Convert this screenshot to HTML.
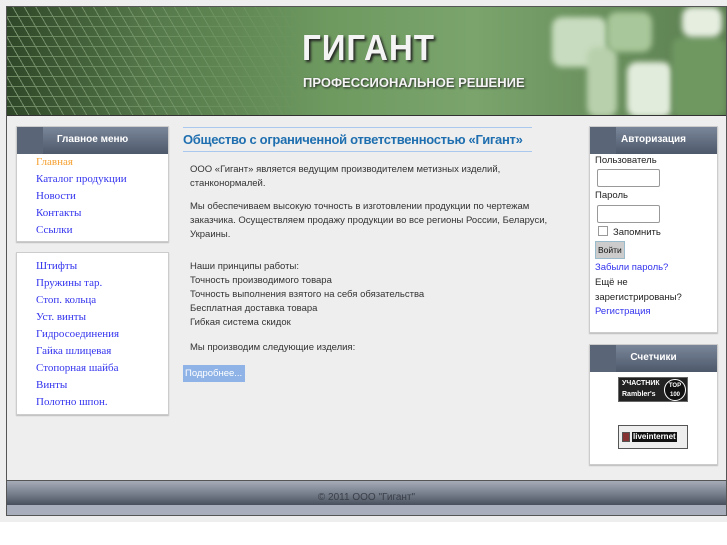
<!DOCTYPE html>
<html><head><meta charset="utf-8"><style>
*{margin:0;padding:0;box-sizing:border-box}
body{width:727px;height:545px;background:#fff;font-family:"Liberation Sans","DejaVu Sans",sans-serif;position:relative;overflow:hidden}
.pg{position:absolute;left:0;top:0;width:727px;height:522px;background:#eee}
.frame{position:absolute;left:6px;top:6px;width:721px;height:510px;border:1px solid #555;background:#eee}
.hdr{position:absolute;left:7px;top:7px;width:719px;height:109px;border-bottom:1px solid #333;overflow:hidden;
background:linear-gradient(90deg,#2f4728 0%,#55784a 20%,#6e9a60 45%,#7aa46c 65%,#5b7e50 100%)}
.grid{position:absolute;left:0;top:0;width:300px;height:109px;opacity:.45;
background:repeating-linear-gradient(60deg,transparent 0 9px,#cfe8c0 9px 10px),repeating-linear-gradient(0deg,transparent 0 9px,#b8d8a8 9px 10px);
-webkit-mask:linear-gradient(90deg,#000,transparent);}
.pz{position:absolute;background:#d9e6d2;border-radius:10px;filter:blur(3px)}
.t1{position:absolute;left:295px;top:20px;color:#f4f4f4;font-weight:bold;font-size:36px;letter-spacing:1px;text-shadow:2px 2px 3px #222;transform:scaleX(.92);transform-origin:left}
.t2{position:absolute;left:296px;top:68px;color:#f4f4f4;font-weight:bold;font-size:13px;text-shadow:1px 1px 2px #222}
.box{position:absolute;background:#fff;border:1px solid #ccc;box-shadow:0 1px 1px #bbb}
.bh{height:27px;background:linear-gradient(#7a8699,#4d596b);color:#fff;font-weight:bold;font-size:10px;text-align:center;line-height:26px;border-left:26px solid #5a6678;padding-right:26px}
.menu a{display:block;font-family:"Liberation Serif",serif;font-size:11px;color:#3333ee;text-decoration:none;line-height:17px;padding-left:19px}
.c{position:absolute;left:190px;font-size:9.5px;color:#333;line-height:14px;white-space:nowrap}
.r{font-size:9.5px;color:#222;line-height:18px;padding-left:5px}
.inp{width:63px;height:18px;border:1px solid #999;border-radius:2px;margin:2px 0 2px 2px}
.ftr{position:absolute;left:7px;top:480px;width:719px;height:35px;background:linear-gradient(#a6acb8,#6d7583 45%,#1f2530 100%);border-top:1px solid #555}
.fs{position:absolute;left:7px;top:505px;width:719px;height:10px;background:#a8aebb}
</style></head><body>
<div class="pg"></div><div class="frame"></div>
<div class="hdr"><div class="grid"></div>
<div class="pz" style="left:545px;top:10px;width:55px;height:50px;background:#c8dcbf"></div>
<div class="pz" style="left:580px;top:40px;width:30px;height:70px;background:#b8d0ac"></div>
<div class="pz" style="left:600px;top:5px;width:45px;height:40px;background:#a8c79a"></div>
<div class="pz" style="left:620px;top:55px;width:45px;height:55px;background:#e2ecdc"></div>
<div class="pz" style="left:665px;top:30px;width:54px;height:80px;background:#6f9861"></div>
<div class="pz" style="left:675px;top:0;width:40px;height:30px;background:#e6eee0"></div>
<div class="t1">ГИГАНТ</div><div class="t2">ПРОФЕССИОНАЛЬНОЕ РЕШЕНИЕ</div></div>

<div class="box" style="left:16px;top:126px;width:153px;height:116px"><div class="bh">Главное меню</div>
<div class="menu"><a style="color:#f5a030">Главная</a><a>Каталог продукции</a><a>Новости</a><a>Контакты</a><a>Ссылки</a></div></div>
<div class="box" style="left:16px;top:252px;width:153px;height:163px"><div class="menu" style="padding-top:5px"><a>Штифты</a><a>Пружины тар.</a><a>Стоп. кольца</a><a>Уст. винты</a><a>Гидросоединения</a><a>Гайка шлицевая</a><a>Стопорная шайба</a><a>Винты</a><a>Полотно шпон.</a></div></div>

<div style="position:absolute;left:183px;top:127px;width:349px;height:25px;border-top:1px solid #a9c8ee;border-bottom:1px solid #a9c8ee"></div>
<div style="position:absolute;left:183px;top:128px;color:#1f6fb0;font-size:13px;font-weight:bold;line-height:23px;white-space:nowrap;letter-spacing:-0.3px">Общество с ограниченной ответственностью «Гигант»</div>
<div class="c" style="top:163px">ООО «Гигант» является ведущим производителем метизных изделий,<br>станконормалей.</div>
<div class="c" style="top:200px">Мы обеспечиваем высокую точность в изготовлении продукции по чертежам<br>заказчика. Осуществляем продажу продукции во все регионы России, Беларуси,<br>Украины.</div>
<div class="c" style="top:260px">Наши принципы работы:<br>Точность производимого товара<br>Точность выполнения взятого на себя обязательства<br>Бесплатная доставка товара<br>Гибкая система скидок</div>
<div class="c" style="top:341px">Мы производим следующие изделия:</div>
<div style="position:absolute;left:183px;top:365px;width:62px;height:17px;background:#8fb3e6;color:#fff;font-size:9.5px;line-height:17px;padding-left:2px">Подробнее...</div>

<div class="box" style="left:589px;top:126px;width:129px;height:207px"><div class="bh">Авторизация</div>
<div class="r" style="line-height:13px">Пользователь</div>
<div class="r"><div class="inp"></div></div>
<div class="r" style="line-height:14px">Пароль</div>
<div class="r"><div class="inp"></div></div>
<div class="r" style="line-height:16px"><span style="display:inline-block;width:10px;height:10px;border:1px solid #999;margin:0 5px 0 3px;vertical-align:-1px"></span>Запомнить</div>
<div class="r" style="line-height:20px"><span style="display:inline-block;background:#ccc;border:1px solid #9bc;font-size:8.5px;line-height:16px;padding:0 2px;color:#111">Войти</span></div>
<div class="r" style="line-height:14px;color:#3333ee">Забыли пароль?</div>
<div class="r" style="line-height:15px">Ещё не<br>зарегистрированы?</div>
<div class="r" style="line-height:14px;color:#3333ee">Регистрация</div></div>

<div class="box" style="left:589px;top:344px;width:129px;height:121px"><div class="bh">Счетчики</div>
<div style="position:absolute;left:28px;top:32px;width:70px;height:25px;background:#222;border:1px solid #666;color:#fff;font-size:7px;font-weight:bold;line-height:11px;padding-left:3px">УЧАСТНИК<br>Rambler's<span style="position:absolute;right:1px;top:1px;width:22px;height:22px;border-radius:50%;background:#111;border:1px solid #fff;font-size:6px;line-height:9px;text-align:center;padding-top:2px">TOP<br>100</span></div>
<div style="position:absolute;left:28px;top:80px;width:70px;height:24px;background:#eee;border:1px solid #555"><span style="position:absolute;left:13px;top:6px;background:#111;color:#fff;font-size:8px;font-weight:bold;padding:0 1px;line-height:10px">liveinternet</span><span style="position:absolute;left:3px;top:6px;width:8px;height:10px;background:#833;border:1px solid #555"></span></div></div>

<div class="ftr"><div style="text-align:center;color:#3a3f48;font-size:10px;line-height:33px">© 2011 ООО "Гигант"</div></div>
<div class="fs"></div>
</body></html>
